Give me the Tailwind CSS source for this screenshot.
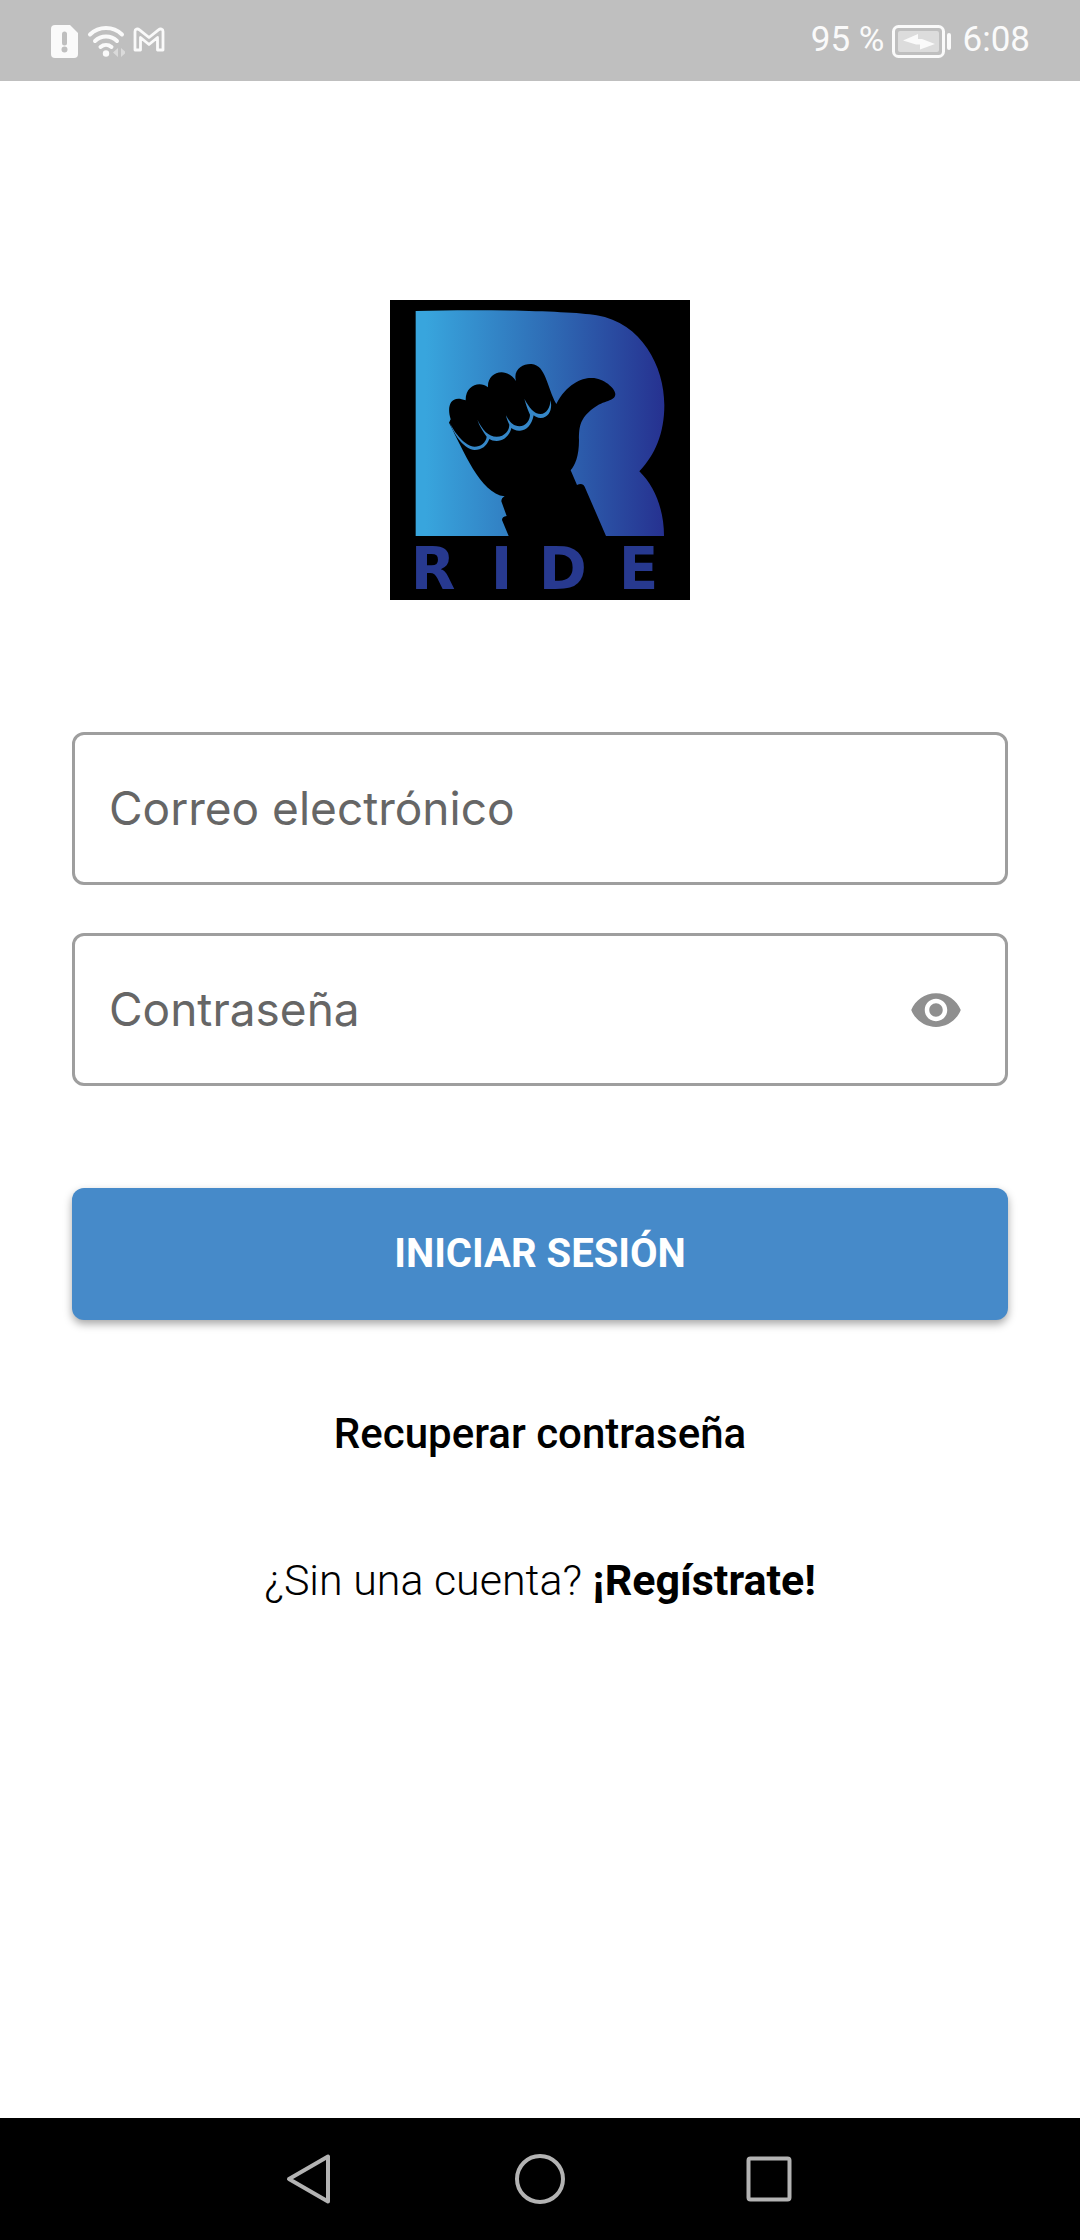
<!DOCTYPE html>
<html lang="es">
<head>
  <meta charset="UTF-8">
  <meta name="viewport" content="width=device-width, initial-scale=1">
  <title>Ride - Iniciar sesión</title>
  <script src="https://cdn.jsdelivr.net/npm/@tailwindcss/browser@4"></script>
</head>
<body class="bg-white font-['Roboto',sans-serif] min-h-screen flex flex-col">

  <!-- Barra de estado -->
  <header class="bg-[#bfbfbf] h-[81px] px-[50px] flex justify-between items-center text-[#fafafa]">
    <div class="flex items-center gap-2">
      <svg class="w-[29px] h-9" viewBox="0 0 29 36" fill="currentColor">
        <path d="M5 2h15l8 8v21a4 4 0 0 1-4 4H5a4 4 0 0 1-4-4V6a4 4 0 0 1 4-4z"/>
        <path d="M14.500 11v9" stroke="#bfbfbf" stroke-width="5" stroke-linecap="round"/>
        <circle cx="14.500" cy="26.500" r="3" fill="#bfbfbf"/>
      </svg>
      <svg class="w-[38px] h-9" viewBox="0 0 38 36" fill="none" stroke="currentColor" stroke-width="4" stroke-linecap="round">
        <path d="M3 11.500a23 23 0 0 1 32 0M8 18a16 16 0 0 1 22 0M13.500 24a8.500 8.500 0 0 1 11 0"/>
        <circle cx="19" cy="30.500" r="3.200" fill="currentColor" stroke="none"/>
        <path d="M31 25v9l-5-4.500zM34 25v9l5-4.500z" fill="#dadada" stroke="none"/>
      </svg>
      <svg class="w-8 h-9" viewBox="0 0 32 36" fill="none" stroke="currentColor" stroke-width="2.800" stroke-linejoin="round">
        <path d="M2 27V8.500C2 6 4.500 5.300 6.500 6.800L16 14.500l9.500-7.700C27.500 5.300 30 6 30 8.500V27h-5.500V14.500L16 21.500l-8.500-7V27z"/>
      </svg>
    </div>
    <div class="flex items-center text-[35px]">
      <span>95 %</span>
      <svg class="w-[62px] h-9 ml-1.5 mr-2.5" viewBox="0 0 62 36" fill="currentColor">
        <rect x="2.500" y="3.500" width="50" height="30" rx="5" fill="none" stroke="currentColor" stroke-width="3"/>
        <rect x="7" y="8" width="41" height="21" rx="2" fill="#dcdcdc"/>
        <path d="M12 17.500 27 11v5h4l13 5-15 5.500v-5h-4z"/>
        <rect x="56" y="10" width="4" height="17" rx="2"/>
      </svg>
      <span>6:08</span>
    </div>
  </header>

  <!-- Contenido -->
  <main class="flex-1 px-[72px] pt-[219px] flex flex-col items-center">

    <!-- Logo -->
    <svg class="w-[300px] h-[300px] overflow-visible" viewBox="30 30 900 900" role="img" aria-label="Ride">
      <defs>
        <linearGradient id="azul" gradientUnits="userSpaceOnUse" x1="107" y1="0" x2="853" y2="0">
          <stop offset="0.040" stop-color="#38a5dd"/>
          <stop offset="0.500" stop-color="#2f70b8"/>
          <stop offset="1" stop-color="#263190"/>
        </linearGradient>
      </defs>
      <rect x="30" y="30" width="900" height="900"/>
      <path fill="url(#azul)" d="M107 63C300 58 560 62 650 76C785 98 853 230 853 345C853 430 825 495 778 544C825 590 852 660 852 738H107z"/>
      <path d="M386 738L366 690Q366 680 380 678L364 634Q364 624 374 619C300 610 250 480 207 398L212 388C200 350 210 312 257 331C256 285 300 272 324 292C320 250 375 225 408 273C398 238 430 220 455 222C498 226 500 290 529 342C560 280 610 262 636 264C670 264 706 295 706 312C706 335 670 330 640 355C600 385 597 410 597 450C597 500 585 525 572 541L591 585C600 580 610 580 614 590L678 738z"/>
      <path fill="#3587c8" d="M209 398C225 430 255 468 284 470C302 470 318 458 320 440C310 425 298 408 292 389C308 420 325 440 350 440C375 440 388 420 388 404C384 395 380 388 378 376C388 395 398 408 418 409C438 408 450 390 450 374C444 360 438 345 433 326C447 352 462 372 482 372C500 372 512 350 511 330C518 352 510 384 482 384C472 384 466 380 461 376C455 405 440 422 420 422C408 423 400 418 394 414C390 435 372 453 350 453C340 453 334 450 328 447C320 468 305 480 284 480C255 478 225 440 209 398z"/>
      <text x="92 332 476 716" y="898" class="font-['DejaVu_Sans',sans-serif] font-bold text-[174px]" fill="#27398f">RIDE</text>
    </svg>

    <form class="w-full mt-[132px] flex flex-col" onsubmit="return false">
      <div class="relative h-[153px] border-3 border-[#9e9e9e] rounded-xl font-['Inter',sans-serif] text-[46px] text-[#666666]">
        <input type="email" id="email" placeholder=" " class="peer w-full h-full px-[34px] outline-none" />
        <label for="email" class="absolute inset-y-0 left-[34px] flex items-center pointer-events-none peer-focus:hidden peer-not-placeholder-shown:hidden">Correo electrónico</label>
      </div>

      <div class="relative mt-12 h-[153px] pr-[42px] border-3 border-[#9e9e9e] rounded-xl flex items-center font-['Inter',sans-serif] text-[46px] text-[#666666]">
        <input type="password" id="password" placeholder=" " class="peer flex-1 min-w-0 h-full px-[34px] outline-none" />
        <label for="password" class="absolute inset-y-0 left-[34px] flex items-center pointer-events-none peer-focus:hidden peer-not-placeholder-shown:hidden">Contraseña</label>
        <button type="button" onclick="togglePassword()" aria-label="Mostrar contraseña">
          <svg class="w-[54px] h-[54px]" viewBox="0 0 24 24" fill="#8f8f8f">
            <path d="M12 4.500C7 4.500 2.730 7.610 1 12c1.730 4.390 6 7.500 11 7.500s9.270-3.110 11-7.500c-1.730-4.390-6-7.500-11-7.500zM12 17c-2.760 0-5-2.240-5-5s2.240-5 5-5 5 2.240 5 5-2.240 5-5 5zm0-8c-1.660 0-3 1.340-3 3s1.340 3 3 3 3-1.340 3-3-1.340-3-3-3z"/>
          </svg>
        </button>
      </div>

      <button type="submit" class="mt-[102px] w-full h-[132px] bg-[#468ac9] text-white text-[40px] font-bold rounded-xl shadow-[0_4px_8px_rgba(0,0,0,0.35)]">INICIAR SESIÓN</button>
    </form>

    <a href="#recuperar" class="mt-[90px] text-[42px] leading-12 font-medium text-black">Recuperar contraseña</a>

    <p class="mt-[98px] text-[43px] leading-12 font-light text-black">¿Sin una cuenta? <a href="#registro" class="font-bold">¡Regístrate!</a></p>
  </main>

  <!-- Barra de navegación -->
  <nav class="bg-black h-[122px] flex justify-center items-center">
    <button class="w-[230px] flex justify-center" aria-label="Atrás">
      <svg class="w-[52px] h-[52px]" viewBox="0 0 52 52" fill="none" stroke="#b3b3b3" stroke-width="4" stroke-linejoin="round">
        <path d="M44 3.500v45L5 26z"/>
      </svg>
    </button>
    <button class="w-[230px] flex justify-center" aria-label="Inicio">
      <svg class="w-[52px] h-[52px]" viewBox="0 0 52 52" fill="none" stroke="#b3b3b3" stroke-width="4">
        <circle cx="26" cy="26" r="23"/>
      </svg>
    </button>
    <button class="w-[230px] flex justify-center" aria-label="Recientes">
      <svg class="w-[52px] h-[52px]" viewBox="0 0 52 52" fill="none" stroke="#b3b3b3" stroke-width="4">
        <rect x="4.500" y="5.500" width="41" height="41" rx="2"/>
      </svg>
    </button>
  </nav>

  <script>
    function togglePassword() {
      const input = document.getElementById("password");
      input.type = input.type === "password" ? "text" : "password";
    }
  </script>
</body>
</html>
